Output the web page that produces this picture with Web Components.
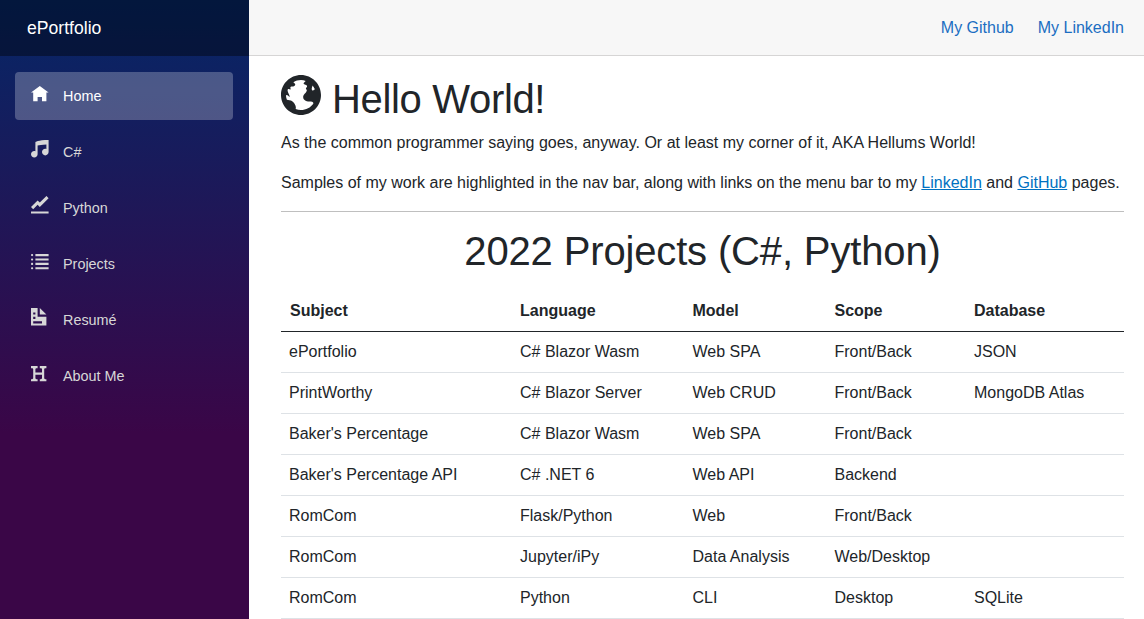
<!DOCTYPE html>
<html lang="en">
<head>
<meta charset="utf-8">
<title>ePortfolio</title>
<style>
  html, body { margin: 0; height: 100%; overflow: hidden; }
  body { font-family: "Liberation Sans", Arial, sans-serif; font-size: 16px; line-height: 1.5; color: #212529; }
</style>
</head>
<body>
<app-shell>
  <side-bar slot="side" brand="ePortfolio">
    <nav-link icon="home" active>Home</nav-link>
    <nav-link icon="music">C#</nav-link>
    <nav-link icon="graph">Python</nav-link>
    <nav-link icon="list">Projects</nav-link>
    <nav-link icon="document">Resumé</nav-link>
    <nav-link icon="header">About Me</nav-link>
  </side-bar>
  <top-row slot="top">
    <a href="#">My Github</a>
    <a href="#">My LinkedIn</a>
  </top-row>
  <home-page></home-page>
</app-shell>

<script>
const ICONS = {
  home: 'M4 0l-4 3h1v4h2v-2h2v2h2v-4.03l1 .03-4-3z',
  music: 'M8 0c-5 0-6 1-6 1v4.09c-.15-.05-.33-.09-.5-.09-.83 0-1.5.67-1.5 1.5s.67 1.5 1.5 1.5 1.5-.67 1.5-1.5v-3.97c.73-.23 1.99-.44 4-.5v2.06c-.15-.05-.33-.09-.5-.09-.83 0-1.5.67-1.5 1.5s.67 1.5 1.5 1.5 1.5-.67 1.5-1.5v-5.5z',
  graph: 'M7.03 0l-3.03 3-1-1-3 3.03 1 1 2-2.03 1 1 4-4-.97-1.03zm-7.03 7v1h8v-1h-8z',
  list: 'M.5 0c-.28 0-.5.23-.5.5s.22.5.5.5.5-.23.5-.5-.22-.5-.5-.5zm1.5 0v1h6v-1h-6zm-1.5 2c-.28 0-.5.23-.5.5s.22.5.5.5.5-.23.5-.5-.22-.5-.5-.5zm1.5 0v1h6v-1h-6zm-1.5 2c-.28 0-.5.23-.5.5s.22.5.5.5.5-.23.5-.5-.22-.5-.5-.5zm1.5 0v1h6v-1h-6zm-1.5 2c-.28 0-.5.23-.5.5s.22.5.5.5.5-.23.5-.5-.22-.5-.5-.5zm1.5 0v1h6v-1h-6z',
  document: 'M0 0v8h7v-4h-4v-4h-3zm4 0v3h3l-3-3zm-3 2h1v1h-1v-1zm0 2h1v1h-1v-1zm0 2h4v1h-4v-1z',
  header: 'M0 0v1h.5c.28 0 .5.22.5.5v4c0 .28-.22.5-.5.5h-.5v1h3v-1h-.5c-.28 0-.5-.22-.5-.5v-1.5h3v1.5c0 .28-.22.5-.5.5h-.5v1h3v-1h-.5c-.28 0-.5-.22-.5-.5v-4c0-.28.22-.5.5-.5h.5v-1h-3v1h.5c.28 0 .5.22.5.5v1.5h-3v-1.5c0-.28.22-.5.5-.5h.5v-1h-3z',
  globe: 'M4 0c-2.2 0-4 1.8-4 4s1.8 4 4 4 4-1.8 4-4-1.8-4-4-4zm0 1c.33 0 .64.09.94.19-.21.2-.45.38-.41.56.04.18.69.13.69.5 0 .27-.42.35-.13.66.35.35-.64.98-.66 1.44-.03.83.84.97 1.53.97.42 0 .53.2.5.44-.54.77-1.46 1.25-2.47 1.25-.38 0-.73-.09-1.06-.22.22-.44-.28-1.31-.75-1.59-.23-.23-.72-.14-1-.25-.09-.27-.18-.54-.19-.84.03-.05.08-.09.16-.09.19 0 .45.38.59.34.18-.04-.74-1.31-.31-1.56.2-.12.6.39.47-.16-.12-.51.36-.28.66-.41.26-.11.45-.41.13-.59-.06-.03-.13-.1-.22-.19.45-.27.97-.44 1.53-.44zm2.31 1.09c.18.22.32.46.44.72 0 .01 0 .02 0 .03-.04.07-.11.11-.26.22-.31.24-.41-.26-.31-.5.05-.12.08-.31.13-.47z'
};
// the 7 unit tall glyphs sit lower in the box than the 8 unit ones
const LOW_ICONS = ['home', 'list', 'header'];

function iconSvg(name, size) {
  const top = LOW_ICONS.includes(name) ? -0.9 : 0;
  return `<svg width="${size}" height="${size}" viewBox="0 ${top} 8 8" fill="currentColor" aria-hidden="true"><path d="${ICONS[name]}"/></svg>`;
}

class AppShell extends HTMLElement {
  constructor() {
    super();
    this.attachShadow({ mode: 'open' });
    this.shadowRoot.innerHTML = `
      <style>
        :host { display: flex; height: 100vh; overflow: hidden; }
        .side { flex: 0 0 249px; }
        .main { flex: 1; min-width: 0; display: flex; flex-direction: column; }
        .content { padding: 19px 20px 0 32px; }
      </style>
      <div class="side"><slot name="side"></slot></div>
      <div class="main">
        <slot name="top"></slot>
        <div class="content"><slot></slot></div>
      </div>
    `;
  }
}

class SideBar extends HTMLElement {
  constructor() {
    super();
    this.attachShadow({ mode: 'open' });
    this.shadowRoot.innerHTML = `
      <style>
        :host { display: flex; flex-direction: column; height: 100vh; background: linear-gradient(180deg, rgb(5, 39, 103) 0%, #3a0647 70%); }
        .brand { height: 56px; flex: none; box-sizing: border-box; padding-left: 27px; display: flex; align-items: center; background: rgba(0, 0, 0, 0.4); color: #fff; font-size: 17.6px; }
        nav { padding: 16px 16px 0 15px; display: flex; flex-direction: column; gap: 8px; }
      </style>
      <div class="brand">${this.getAttribute('brand')}</div>
      <nav><slot></slot></nav>
    `;
  }
}

class NavLink extends HTMLElement {
  constructor() {
    super();
    this.attachShadow({ mode: 'open' });
    this.shadowRoot.innerHTML = `
      <style>
        :host { display: flex; align-items: center; height: 48px; box-sizing: border-box; padding: 2px 0 0 16px; border-radius: 4px; color: #d7d7d7; font-size: 14.4px; cursor: pointer; }
        :host([active]) { background: rgba(255, 255, 255, 0.25); color: #fff; }
        .ico { width: 32px; flex: none; display: flex; align-self: flex-start; margin-top: 10px; }
      </style>
      <span class="ico">${iconSvg(this.getAttribute('icon'), 17.6)}</span>
      <slot></slot>
    `;
  }
}

class TopRow extends HTMLElement {
  constructor() {
    super();
    this.attachShadow({ mode: 'open' });
    this.shadowRoot.innerHTML = `
      <style>
        :host { display: flex; flex: none; justify-content: flex-end; align-items: center; gap: 24px; height: 56px; box-sizing: border-box; padding-right: 20px; background: #f7f7f7; border-bottom: 1px solid #d6d5d5; }
        ::slotted(a) { color: #1b6ec2; text-decoration: none; white-space: nowrap; }
      </style>
      <slot></slot>
    `;
  }
}

class ProjectsTable extends HTMLElement {
  constructor() {
    super();
    this.attachShadow({ mode: 'open' });
    const head = ['Subject', 'Language', 'Model', 'Scope', 'Database'];
    const rows = [
      ['ePortfolio', 'C# Blazor Wasm', 'Web SPA', 'Front/Back', 'JSON'],
      ['PrintWorthy', 'C# Blazor Server', 'Web CRUD', 'Front/Back', 'MongoDB Atlas'],
      ["Baker's Percentage", 'C# Blazor Wasm', 'Web SPA', 'Front/Back', ''],
      ["Baker's Percentage API", 'C# .NET 6', 'Web API', 'Backend', ''],
      ['RomCom', 'Flask/Python', 'Web', 'Front/Back', ''],
      ['RomCom', 'Jupyter/iPy', 'Data Analysis', 'Web/Desktop', ''],
      ['RomCom', 'Python', 'CLI', 'Desktop', 'SQLite']
    ];
    this.shadowRoot.innerHTML = `
      <style>
        :host { display: block; }
        table { width: 100%; border-collapse: collapse; table-layout: fixed; }
        th, td { padding: 8px; text-align: left; font-weight: normal; border-bottom: 1px solid #dee2e6; }
        th { font-weight: bold; border-bottom-color: #212529; }
        th:first-child { padding-left: 9px; }
      </style>
      <table>
        <colgroup><col style="width:231px"><col style="width:172.5px"><col style="width:142px"><col style="width:139.5px"><col></colgroup>
        <thead><tr>${head.map(h => `<th>${h}</th>`).join('')}</tr></thead>
        <tbody>${rows.map(r => `<tr>${r.map(c => `<td>${c}</td>`).join('')}</tr>`).join('')}</tbody>
      </table>
    `;
  }
}

class HomePage extends HTMLElement {
  constructor() {
    super();
    this.attachShadow({ mode: 'open' });
    this.shadowRoot.innerHTML = `
      <style>
        :host { display: block; }
        h1, h2 { font-weight: 500; font-size: 40px; line-height: 48px; margin: 0; }
        h1 { display: flex; align-items: center; gap: 11px; margin-bottom: 8px; letter-spacing: -0.33px; }
        h1 svg { margin-top: -8px; }
        h2 { text-align: center; margin: 0 0 16px; letter-spacing: -0.15px; }
        p { margin: 0 0 16px; }
        a { color: #0071c1; }
        hr { border: 0; border-top: 1px solid rgba(0, 0, 0, 0.25); margin: 16px 0 15px; }
      </style>
      <h1>${iconSvg('globe', 40)}Hello World!</h1>
      <p>As the common programmer saying goes, anyway. Or at least my corner of it, AKA Hellums World!</p>
      <p>Samples of my work are highlighted in the nav bar, along with links on the menu bar to my <a href="#">LinkedIn</a> and <a href="#">GitHub</a> pages.</p>
      <hr>
      <h2>2022 Projects (C#, Python)</h2>
      <projects-table></projects-table>
    `;
  }
}

customElements.define('app-shell', AppShell);
customElements.define('side-bar', SideBar);
customElements.define('nav-link', NavLink);
customElements.define('top-row', TopRow);
customElements.define('projects-table', ProjectsTable);
customElements.define('home-page', HomePage);
</script>
</body>
</html>
